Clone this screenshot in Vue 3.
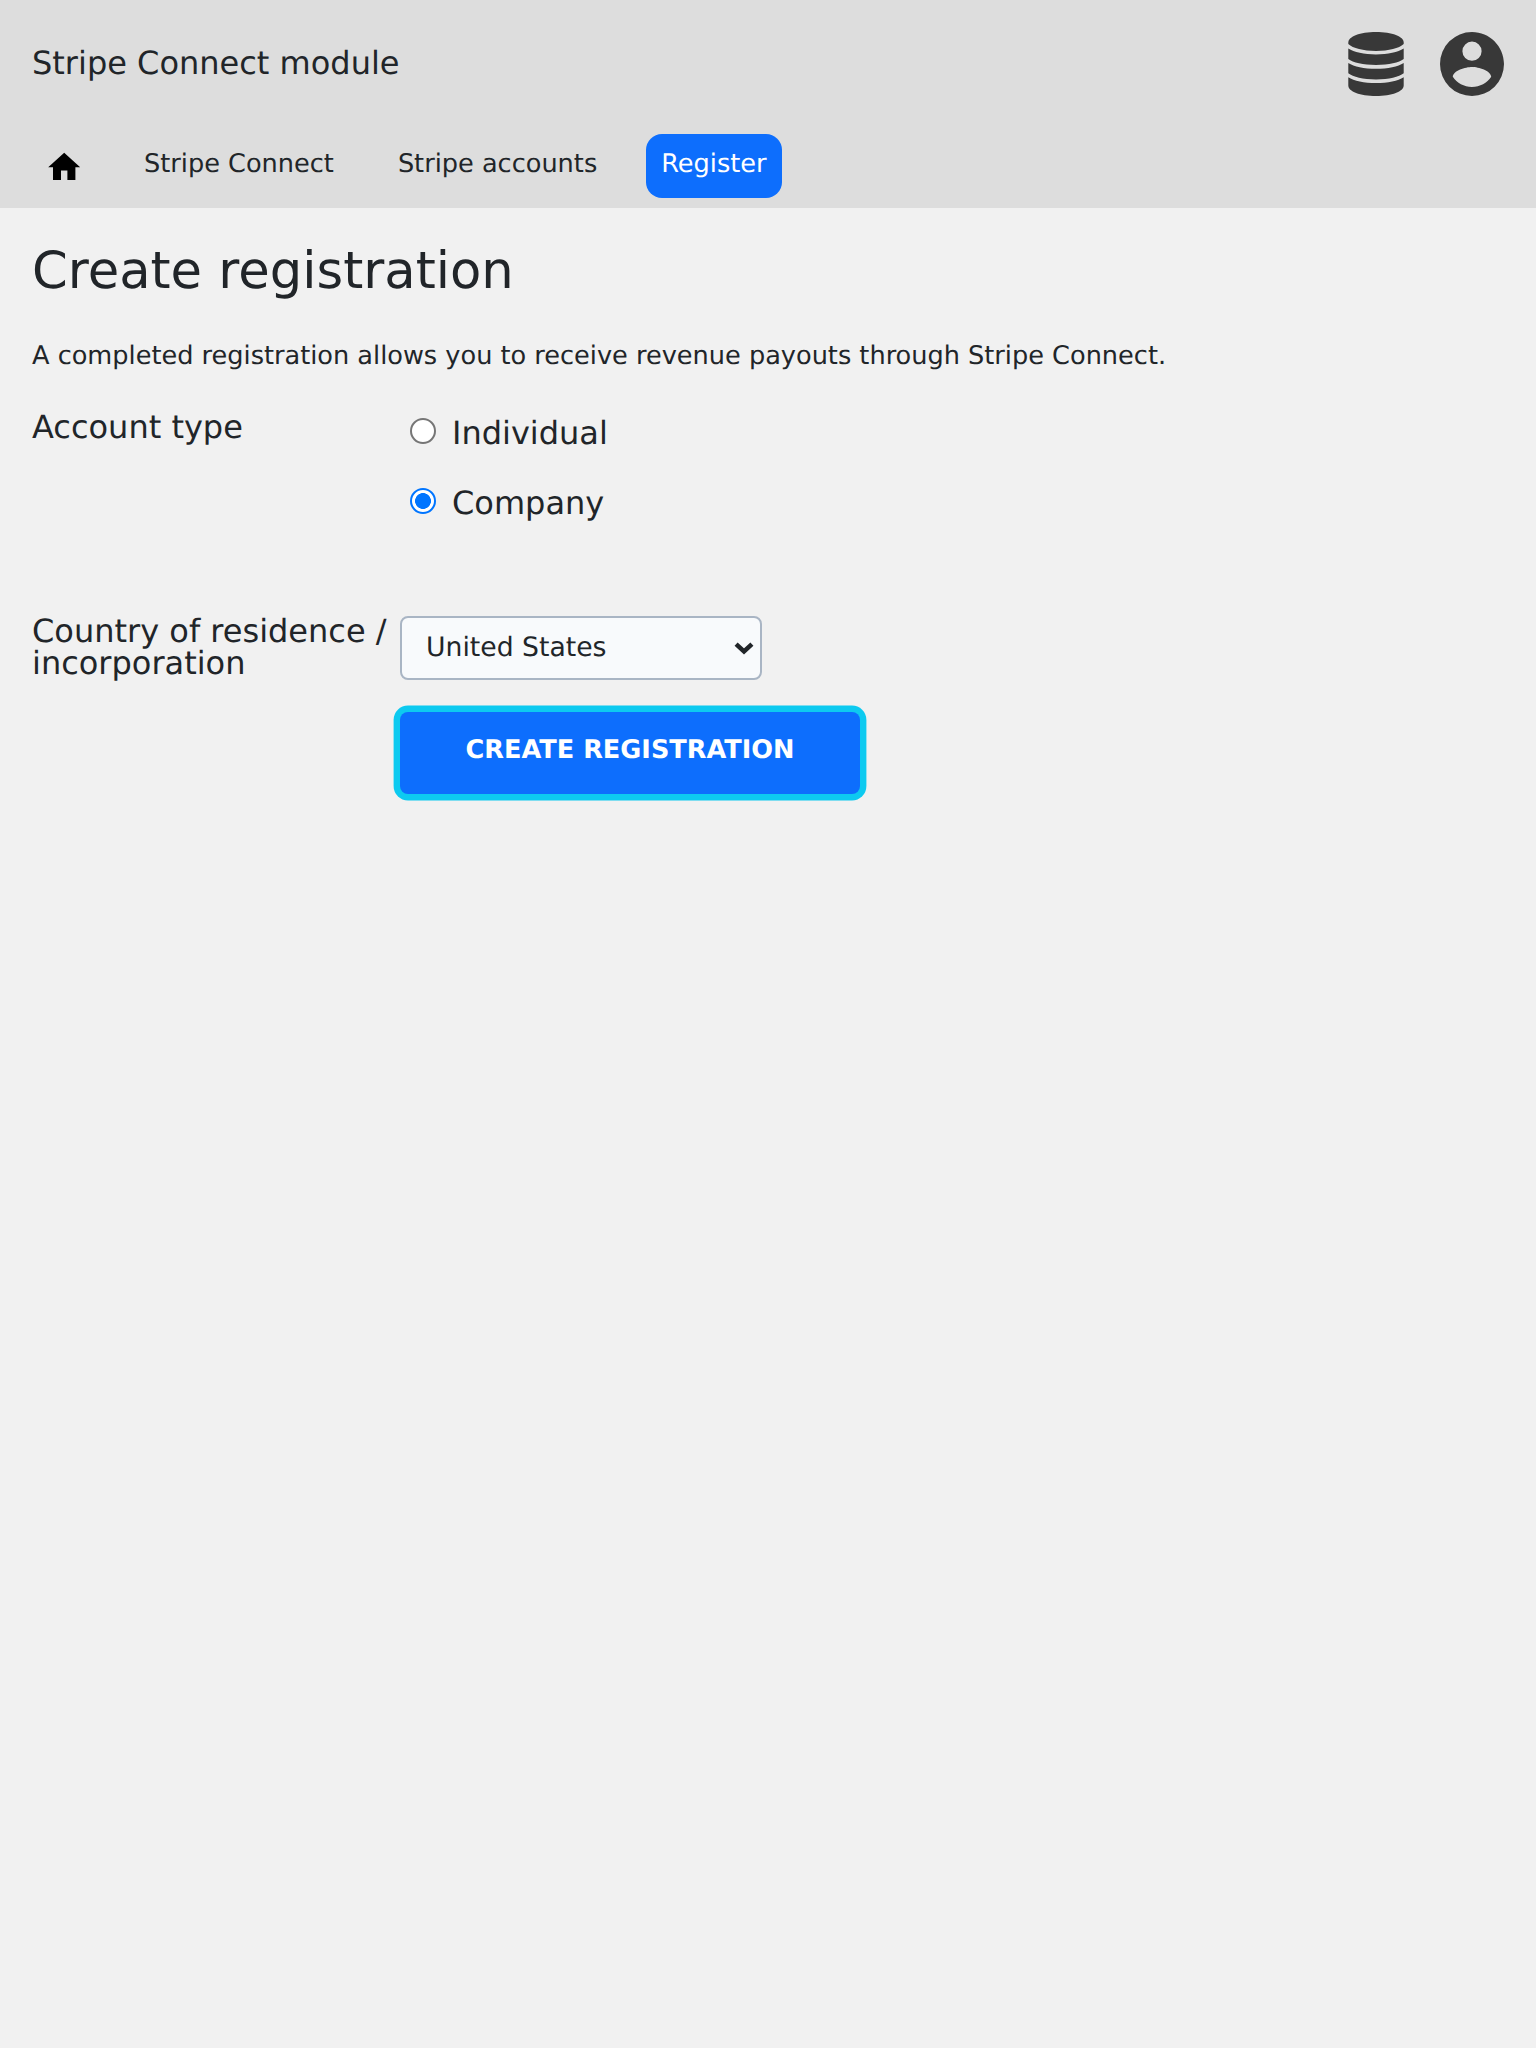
<script setup>
import { ref } from 'vue'

const links = ['Stripe Connect', 'Stripe accounts', 'Register']
const active = ref('Register')
const types = ['Individual', 'Company']
const accountType = ref('Company')
const country = ref('United States')
</script>

<template>
  <div class="page">
    <header class="header">
      <div class="topbar">
        <span class="brand">Stripe Connect module</span>
        <div class="actions">
          <svg class="database" viewBox="0 0 56 64" fill="#383838">
            <path d="M0.300 10.500C0.300 4.500 12 0 28 0s27.700 4.500 27.700 10.500V12C51 16.300 41 18.900 28 18.900S5 16.300 0.300 12Z" />
            <path d="M0.300 16.500C6 20.200 16 22.400 28 22.400S50 20.200 55.700 16.500V27C51 30.600 41 32.900 28 32.900S5 30.600 0.300 27Z" />
            <path d="M0.300 31C6 34.600 16 36.800 28 36.800S50 34.600 55.700 31V41.300C51 45 41 47.400 28 47.400S5 45 0.300 41.300Z" />
            <path d="M0.300 45.300C6 49 16 51.100 28 51.100S50 49 55.700 45.300V53.500C55.700 59.500 44 64 28 64S0.300 59.500 0.300 53.500Z" />
          </svg>
          <svg class="account" viewBox="2 2 20 20" fill="#383838">
            <path d="M12,19.2C9.5,19.2 7.29,17.92 6,16C6.03,14 10,12.9 12,12.9C14,12.9 17.97,14 18,16C16.71,17.92 14.5,19.2 12,19.2M12,5A3,3 0 0,1 15,8A3,3 0 0,1 12,11A3,3 0 0,1 9,8A3,3 0 0,1 12,5M12,2A10,10 0 0,0 2,12A10,10 0 0,0 12,22A10,10 0 0,0 22,12C22,6.47 17.5,2 12,2Z" />
          </svg>
        </div>
      </div>
      <nav class="nav">
        <a class="home">
          <svg viewBox="0 0 24 24"><path d="M10,20V14H14V20H19V12H22L12,3L2,12H5V20H10Z" /></svg>
        </a>
        <a v-for="link in links" :key="link" class="link" :class="{ active: link === active }">{{ link }}</a>
      </nav>
    </header>

    <main class="content">
      <h1>Create registration</h1>
      <p class="intro">A completed registration allows you to receive revenue payouts through Stripe Connect.</p>
      <form class="form" @submit.prevent>
        <div class="label">Account type</div>
        <div class="radios">
          <label v-for="type in types" :key="type" class="option">
            <input v-model="accountType" type="radio" name="account-type" :value="type" />
            <span>{{ type }}</span>
          </label>
        </div>
        <label class="label country-label" for="country">Country of residence / incorporation</label>
        <div class="select-wrap">
          <select id="country" v-model="country">
            <option>United States</option>
          </select>
          <svg class="chevron" viewBox="0 0 20 13"><path d="M2.100 2.100L10 9.500L17.900 2.100" fill="none" stroke="#212529" stroke-width="4.500" /></svg>
        </div>
        <button class="submit" type="submit">CREATE REGISTRATION</button>
      </form>
    </main>
  </div>
</template>

<style>
body {
  background: #f1f1f1;
}
</style>

<style scoped>
.page {
  min-height: 2048px;
  background: #f1f1f1;
  color: #212529;
  font-family: "DejaVu Sans", sans-serif;
  font-size: 32px;
  line-height: 32px;
  text-rendering: geometricPrecision;
}
.header {
  height: 208px;
  background: #ddd;
}
.topbar {
  display: flex;
  justify-content: space-between;
  height: 102px;
  padding: 32px 32px 0;
}
.brand {
  padding-top: 15px;
}
.actions {
  display: flex;
  gap: 36px;
}
.database {
  width: 56px;
  height: 64px;
}
.account {
  width: 64px;
  height: 64px;
}
.nav {
  display: flex;
  gap: 34px;
  padding-left: 32px;
  font-size: 25.6px;
}
.home {
  width: 64px;
  height: 64px;
  margin-right: -1px;
}
.home svg {
  display: block;
  width: 38.400px;
  height: 38.400px;
  margin: 13.500px auto 0;
}
.link {
  height: 64px;
  padding: 0 15px;
  border-radius: 16px;
  box-sizing: border-box;
  line-height: 60px;
}
.link.active {
  background: #0d6efd;
  color: #fff;
}
.content {
  padding: 32px;
}
h1 {
  margin: 0;
  font-size: 51.200px;
  font-weight: 400;
  line-height: 62px;
}
.intro {
  margin: 34px 0 0;
  font-size: 25.600px;
  line-height: 40px;
}
.form {
  display: grid;
  grid-template-columns: 368px 1fr;
  margin-top: 35px;
}
.label {
  align-self: start;
}
.country-label {
  margin-top: -1px;
}
.radios {
  display: flex;
  flex-direction: column;
  gap: 38px;
  height: 205px;
  padding: 6px 0 0 10px;
  box-sizing: border-box;
}
.option {
  display: flex;
  height: 32px;
}
.option input {
  appearance: none;
  width: 26px;
  height: 26px;
  margin: 1px 16px 0 0;
  border: 2px solid #767676;
  border-radius: 50%;
  background: #fff;
}
.option input:checked {
  border-color: #0075ff;
  background: radial-gradient(circle, #0075ff 7.600px, #fff 8.200px);
}
.select-wrap {
  position: relative;
  width: 362px;
  height: 64px;
}
select {
  appearance: none;
  display: block;
  width: 362px;
  height: 64px;
  padding: 0 24px 2px;
  border: 2px solid #a9b5c4;
  border-radius: 8px;
  background: #f8fafc;
  color: #212529;
  font: 26.667px "DejaVu Sans", sans-serif;
  text-rendering: geometricPrecision;
}
.chevron {
  position: absolute;
  top: 26px;
  right: 8px;
  width: 20px;
  height: 13px;
}
.submit {
  grid-column: 2;
  width: 460px;
  height: 82px;
  margin: 32px 0 0;
  padding: 0 0 6px;
  border: 0;
  border-radius: 8px;
  box-shadow: 0 0 0 6.400px #0dcaf0;
  background: #0d6efd;
  color: #fff;
  font: bold 25.600px "DejaVu Sans", sans-serif;
  text-rendering: geometricPrecision;
}
</style>
